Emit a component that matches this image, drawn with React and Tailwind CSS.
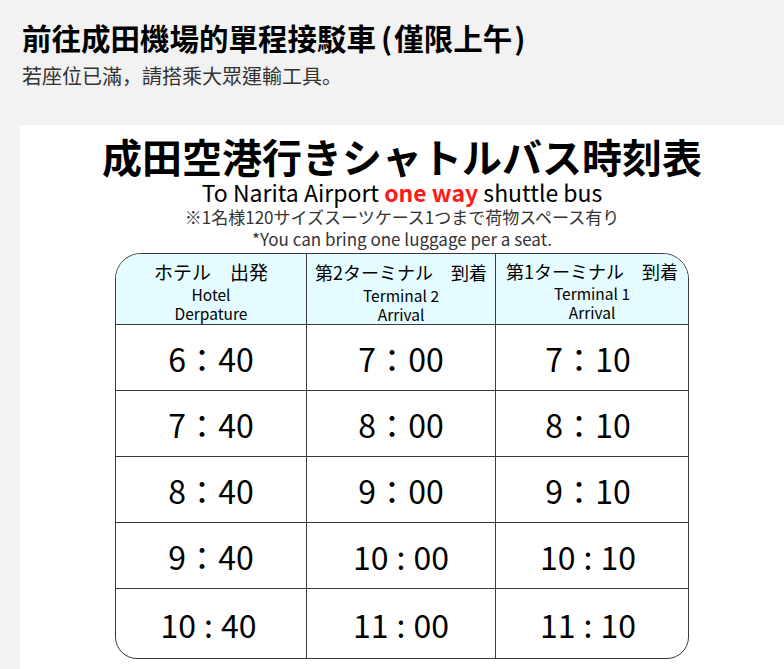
import React from "react";

const rows = [
  ["6", "40", "7", "00", "7", "10"],
  ["7", "40", "8", "00", "8", "10"],
  ["8", "40", "9", "00", "9", "10"],
  ["9", "40", "10", "00", "10", "10"],
  ["10", "40", "11", "00", "11", "10"],
];

function Time({ h, m }) {
  if (h.length === 1) {
    return (
      <span>
        {h}：{m}
      </span>
    );
  }
  return (
    <span>
      {h}
      <span className="mx-[8px]">:</span>
      {m}
    </span>
  );
}

const SC = { fontFamily: '"Noto Sans CJK SC", sans-serif' };

export default function App() {
  return (
    <div
      className="min-h-screen bg-[#f2f2f2] pl-[20px] pt-[18px]"
      style={{ fontFamily: '"Noto Sans CJK TC", "Noto Sans CJK SC", sans-serif' }}
    >
      <h1 className="text-[29.5px] font-bold leading-[38px] text-black pl-[2px]">
        前往成田機場的單程接駁車<span className="ml-[5px] mr-[2px]">(</span>僅限上午
        <span className="ml-[2px]">)</span>
      </h1>
      <p className="mt-[5px] text-[20px] leading-[30px] text-[#333] pl-[2px]">
        若座位已滿<span style={SC}>，</span>請搭乘大眾運輸工具<span style={SC}>。</span>
      </p>
      <div
        className="mt-[34px] bg-white pb-[20px] pt-[8px] flex flex-col items-center text-black"
        style={{ fontFamily: '"Noto Sans CJK JP", sans-serif' }}
      >
        <div className="text-[40px] font-bold leading-[46px]">成田空港行きシャトルバス時刻表</div>
        <div className="text-[23px] leading-[26px]">
          To Narita Airport <span className="text-[#ff1a1a] font-bold">one way</span> shuttle bus
        </div>
        <div className="text-[17px] leading-[22px] text-[#333] mt-[1px]">
          ※1名様120サイズスーツケース1つまで荷物スペース有り
        </div>
        <div className="text-[17px] leading-[22px] text-[#333]">
          *You can bring one luggage per a seat.
        </div>
        <div className="mt-[3px] w-[574px] rounded-t-[26px] rounded-b-[22px] border-[1.5px] border-[#3a3a3a] overflow-hidden">
          <div className="grid grid-cols-[191px_189px_1fr] bg-[#e4fcff] h-[71px] border-b-[1.5px] border-[#3a3a3a]">
            <div className="flex flex-col items-center pt-[5px] border-r-[1.5px] border-[#3a3a3a]">
              <div className="text-[19px] leading-[26px]">ホテル　出発</div>
              <div className="text-[15.5px] leading-[19px]">Hotel</div>
              <div className="text-[15.5px] leading-[18px]">Derpature</div>
            </div>
            <div className="flex flex-col items-center pt-[5px] border-r-[1.5px] border-[#3a3a3a]">
              <div className="text-[18px] leading-[26px]">第2ターミナル　到着</div>
              <div className="text-[15.5px] leading-[20px]">Terminal 2</div>
              <div className="text-[15.5px] leading-[18px]">Arrival</div>
            </div>
            <div className="flex flex-col items-center pt-[4px]">
              <div className="text-[18px] leading-[26px]">第1ターミナル　到着</div>
              <div className="text-[15.5px] leading-[18px]">Terminal 1</div>
              <div className="text-[15.5px] leading-[20px]">Arrival</div>
            </div>
          </div>
          {rows.map((r, i) => {
            const last = i === rows.length - 1;
            return (
              <div
                key={i}
                className={
                  "grid grid-cols-[191px_189px_1fr] text-[32px] " +
                  (last ? "h-[69px]" : "h-[66px] border-b-[1.5px] border-[#3a3a3a]")
                }
              >
                <div
                  className={
                    "flex items-center justify-center border-r-[1.5px] border-[#3a3a3a] " +
                    (last ? "pr-[5px]" : "")
                  }
                >
                  <Time h={r[0]} m={r[1]} />
                </div>
                <div className="flex items-center justify-center border-r-[1.5px] border-[#3a3a3a]">
                  <Time h={r[2]} m={r[3]} />
                </div>
                <div className="flex items-center justify-center pr-[8px]">
                  <Time h={r[4]} m={r[5]} />
                </div>
              </div>
            );
          })}
        </div>
      </div>
    </div>
  );
}
